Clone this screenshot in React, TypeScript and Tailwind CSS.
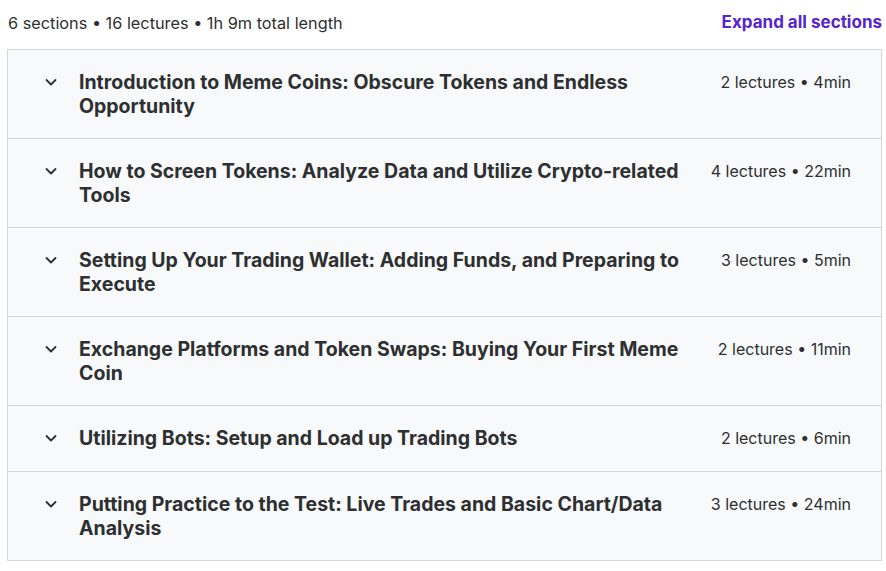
const sections = [
  { title: 'Introduction to Meme Coins: Obscure Tokens and Endless Opportunity', meta: '2 lectures • 4min' },
  { title: 'How to Screen Tokens: Analyze Data and Utilize Crypto-related Tools', meta: '4 lectures • 22min' },
  { title: 'Setting Up Your Trading Wallet: Adding Funds, and Preparing to Execute', meta: '3 lectures • 5min' },
  { title: 'Exchange Platforms and Token Swaps: Buying Your First Meme Coin', meta: '2 lectures • 11min' },
  { title: 'Utilizing Bots: Setup and Load up Trading Bots', meta: '2 lectures • 6min' },
  { title: 'Putting Practice to the Test: Live Trades and Basic Chart/Data Analysis', meta: '3 lectures • 24min' },
];

function Chevron() {
  return (
    <svg width="16" height="16" viewBox="0 0 16 16" fill="none" className="shrink-0">
      <path d="M3.5 6 L8 10.5 L12.5 6" stroke="#2d2f31" strokeWidth="1.8" strokeLinecap="round" strokeLinejoin="round" />
    </svg>
  );
}

export default function App() {
  return (
    <div className="w-[886px] h-[571px] bg-white text-[#2d2f31] pl-[7px] pr-[4px]" style={{ fontFamily: 'Inter, "Noto Sans", sans-serif' }}>
      <div className="flex items-center justify-between h-[46px] mb-[3px]">
        <span className="text-[16.3px] pl-[1px]">6 sections • 16 lectures • 1h 9m total length</span>
        <button className="text-[17px] font-bold text-[#5624d0]">Expand all sections</button>
      </div>
      <div className="border border-[#d1d7dc]">
        {sections.map((s, i) => (
          <div
            key={i}
            className={`flex items-start bg-[#f7f9fa] pl-[35px] pr-[30px] py-[20px] ${i > 0 ? 'border-t border-[#d1d7dc]' : ''}`}
          >
            <div className="h-[24px] flex items-center w-[36px] shrink-0">
              <Chevron />
            </div>
            <div className="flex-1 min-h-[25px] text-[19.5px] font-bold leading-[24px]">{s.title}</div>
            <div className="ml-[30px] whitespace-nowrap text-[16px] leading-[24px]">{s.meta}</div>
          </div>
        ))}
      </div>
    </div>
  );
}
